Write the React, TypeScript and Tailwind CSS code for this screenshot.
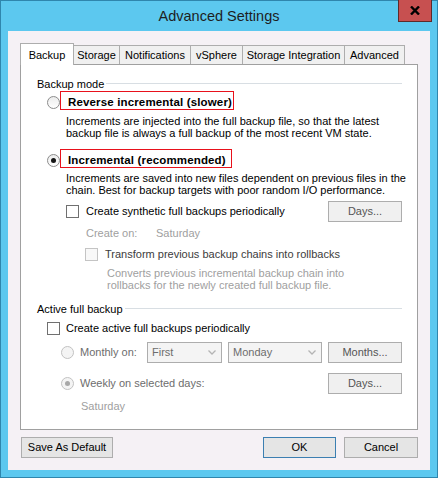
import React from 'react';

const Radio: React.FC<{ checked?: boolean; disabled?: boolean }> = ({ checked, disabled }) => (
    <span
        className={
            disabled
                ? 'w-[13px] h-[13px] shrink-0 rounded-full border border-[#c2c2c2] bg-[#f4f4f4] flex items-center justify-center'
                : 'w-[13px] h-[13px] shrink-0 rounded-full border border-[#8c8c8c] bg-gradient-to-b from-[#ececec] to-white flex items-center justify-center'
        }
    >
        {checked && (
            <span className={disabled ? 'w-[5px] h-[5px] rounded-full bg-[#a8a8a8]' : 'w-[5px] h-[5px] rounded-full bg-[#151515]'} />
        )}
    </span>
);

const Check: React.FC<{ disabled?: boolean }> = ({ disabled }) => (
    <span
        className={
            disabled
                ? 'w-[13px] h-[13px] shrink-0 border border-[#c4c4c4] bg-[#f8f8f8]'
                : 'w-[13px] h-[13px] shrink-0 border border-[#707070] bg-white'
        }
    />
);

const Button: React.FC<{ label: string; w: string; muted?: boolean; primary?: boolean }> = ({ label, w, muted, primary }) => (
    <div
        className={[
            w,
            'h-[21px] flex items-center justify-center border',
            primary ? 'border-[#3c7fb1] bg-[#e5e5e5] text-black' : muted ? 'border-[#adadad] bg-[#f0f0f0] text-[#555]' : 'border-[#adadad] bg-[#e5e5e5] text-black',
        ].join(' ')}
    >
        {label}
    </div>
);

const Combo: React.FC<{ value: string; w: string }> = ({ value, w }) => (
    <div className={[w, 'h-[21px] flex items-center border border-[#adadad] bg-[#f4f4f4] pl-[4px] pr-[5px] text-[#6d6d6d]'].join(' ')}>
        <span className="flex-1">{value}</span>
        <svg width="8" height="5" viewBox="0 0 8 5">
            <path d="M0.5 0.5 L4 4 L7.5 0.5" fill="none" stroke="#b4b4b4" strokeWidth="1.3" />
        </svg>
    </div>
);

const GroupHeader: React.FC<{ title: string; mt: string }> = ({ title, mt }) => (
    <div className={[mt, 'ml-[16px] h-[14px] flex items-center gap-[2px]'].join(' ')}>
        <span className="leading-[14px]">{title}</span>
        <span className="flex-1 h-px bg-[#d8dee3] -mt-[1px]" />
    </div>
);

const tabs = [
    { label: 'Storage', w: 'w-[46px]' },
    { label: 'Notifications', w: 'w-[71px]' },
    { label: 'vSphere', w: 'w-[52px]' },
    { label: 'Storage Integration', w: 'w-[102px]' },
    { label: 'Advanced', w: 'w-[60px]' },
];

export default function App() {
    return (
        <div className="w-[438px] h-[478px] bg-[#5cc8ef] border border-[#2f86ad] flex flex-col font-['Liberation_Sans',Arial,sans-serif] text-[11px] text-black select-none whitespace-nowrap">
            {/* title bar */}
            <div className="relative h-[30px] flex items-center justify-center">
                <span className="text-[14.5px] text-[#1e1e1e] pt-[1px]">Advanced Settings</span>
                <div className="absolute right-[5px] -top-px w-[34px] h-[22px] bg-[#c75050] border border-t-0 border-[#5e2a2a] flex items-center justify-center">
                    <svg width="10" height="9" viewBox="0 0 10 9">
                        <path d="M1 0.5 L9 8.5 M9 0.5 L1 8.5" stroke="#000" strokeWidth="2.4" />
                    </svg>
                </div>
            </div>

            {/* client area */}
            <div className="mx-[7px] h-[439px] bg-[#f5f1f5] flex flex-col">
                {/* tab strip */}
                <div className="mt-[12px] ml-[12px] h-[21px] flex items-end">
                    <div className="relative z-10 w-[54px] h-[22px] -mb-px bg-white border border-b-0 border-[#adadad] flex justify-center pt-[3px]">
                        Backup
                    </div>
                    {tabs.map((t) => (
                        <div
                            key={t.label}
                            className={[t.w, 'h-[19px] bg-[#f0f0f0] border-t border-r border-[#adadad] flex items-center justify-center pt-[1px]'].join(' ')}
                        >
                            {t.label}
                        </div>
                    ))}
                </div>

                {/* tab page */}
                <div className="mx-[12px] h-[366px] bg-white border border-[#a0a0a0] flex flex-col pr-[15px]">
                    <GroupHeader title="Backup mode" mt="mt-[12px]" />

                    <div className="ml-[26px] h-[19px] flex items-end">
                        <span className="mb-[1px]"><Radio /></span>
                        <div className="w-[174px] h-[19px] border border-[#e8111b] flex items-end pl-[7px] font-bold text-[11.5px] tracking-[0.15px] leading-[13px]">
                            Reverse incremental (slower)
                        </div>
                    </div>
                    <div className="mt-[5px] ml-[45px] leading-[12px]">
                        Increments are injected into the full backup file, so that the latest
                        <br />
                        backup file is always a full backup of the most recent VM state.
                    </div>

                    <div className="mt-[10px] ml-[26px] h-[19px] flex items-end">
                        <span className="mb-[1px]"><Radio checked /></span>
                        <div className="w-[172px] h-[19px] border border-[#e8111b] flex items-end pl-[7px] font-bold text-[11.5px] tracking-[0.15px] leading-[13px]">
                            Incremental (recommended)
                        </div>
                    </div>
                    <div className="mt-[4px] ml-[45px] leading-[12px]">
                        Increments are saved into new files dependent on previous files in the
                        <br />
                        chain. Best for backup targets with poor random I/O performance.
                    </div>

                    <div className="mt-[5px] ml-[45px] h-[21px] flex items-center">
                        <Check />
                        <span className="ml-[7px]">Create synthetic full backups periodically</span>
                        <span className="ml-auto">
                            <Button label="Days..." w="w-[74px]" muted />
                        </span>
                    </div>

                    <div className="mt-[4px] ml-[65px] h-[14px] flex items-center text-[#a0a0a0]">
                        <span className="w-[70px]">Create on:</span>
                        <span>Saturday</span>
                    </div>

                    <div className="mt-[7px] ml-[64px] h-[14px] flex items-center">
                        <Check disabled />
                        <span className="ml-[7px] text-[#3c3c3c]">Transform previous backup chains into rollbacks</span>
                    </div>
                    <div className="mt-[6px] ml-[86px] leading-[12px] text-[#a0a0a0]">
                        Converts previous incremental backup chain into
                        <br />
                        rollbacks for the newly created full backup file.
                    </div>

                    <GroupHeader title="Active full backup" mt="mt-[11px]" />

                    <div className="mt-[5px] ml-[26px] h-[14px] flex items-center">
                        <Check />
                        <span className="ml-[6px]">Create active full backups periodically</span>
                    </div>

                    <div className="mt-[7px] ml-[40px] h-[21px] flex items-center">
                        <Radio disabled />
                        <span className="ml-[6px] text-[#6d6d6d] w-[67px]">Monthly on:</span>
                        <Combo value="First" w="w-[75px]" />
                        <span className="ml-[6px]">
                            <Combo value="Monday" w="w-[94px]" />
                        </span>
                        <span className="ml-auto">
                            <Button label="Months..." w="w-[74px]" muted />
                        </span>
                    </div>

                    <div className="mt-[10px] ml-[40px] h-[21px] flex items-center">
                        <Radio checked disabled />
                        <span className="ml-[6px] text-[#6d6d6d]">Weekly on selected days:</span>
                        <span className="ml-auto">
                            <Button label="Days..." w="w-[74px]" muted />
                        </span>
                    </div>

                    <div className="mt-[5px] ml-[60px] h-[14px] flex items-center text-[#a0a0a0]">Saturday</div>
                </div>

                {/* dialog buttons */}
                <div className="mt-[7px] ml-[13px] mr-[12px] flex items-center">
                    <Button label="Save As Default" w="w-[92px]" />
                    <span className="ml-auto">
                        <Button label="OK" w="w-[73px]" primary />
                    </span>
                    <span className="ml-[8px]">
                        <Button label="Cancel" w="w-[74px]" />
                    </span>
                </div>
            </div>
        </div>
    );
}
